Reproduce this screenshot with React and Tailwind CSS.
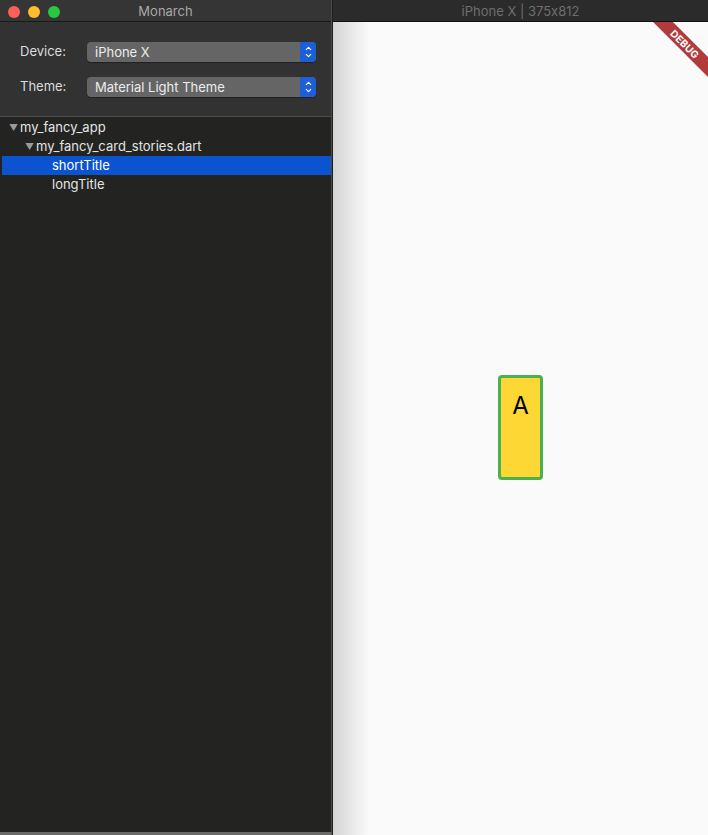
import { ChevronDown, ChevronUp } from "lucide-react";

function Select({ value }) {
  return (
    <div className="flex h-[20px] w-[229px] items-center overflow-hidden rounded-[4px] bg-[#656565] shadow-[0_1px_1px_rgba(0,0,0,0.35)]">
      <span className="flex-1 pl-[8px] text-[13px] leading-none text-[#ececec]">{value}</span>
      <span className="flex h-full w-[16px] flex-col items-center justify-center rounded-r-[4px] bg-[#1d5fd8]">
        <ChevronUp size={9} strokeWidth={3} className="-mb-[2px] text-white" />
        <ChevronDown size={9} strokeWidth={3} className="text-white" />
      </span>
    </div>
  );
}

function Row({ depth, label, open, selected }) {
  return (
    <div
      className={
        "ml-[2px] flex h-[19px] items-center text-[13px] leading-none " +
        (selected ? "bg-[#0b53cf] text-white" : "text-[#e4e4e4]")
      }
      style={{ paddingLeft: 7 + depth * 16 }}
    >
      <span className="w-[11px] text-[9px] text-[#9a9a9a]">{open ? "▼" : ""}</span>
      <span>{label}</span>
    </div>
  );
}

export default function App() {
  return (
    <div
      className="flex h-[835px] w-[708px] overflow-hidden bg-[#1e1e1e] [font-feature-settings:'calt'_0]"
      style={{ fontFamily: "Inter, 'Noto Sans', sans-serif" }}
    >
      {/* Monarch window */}
      <div className="flex h-full w-[332px] flex-col border-r border-b-[3px] border-[#4a4a48] border-b-[#6a6a68] bg-[#232422]">
        <div className="relative flex h-[22px] items-center justify-center border-b border-[#1a1a1a] bg-[#353535] pt-[2px]">
          <div className="absolute left-[8px] top-[6px] flex gap-[8px]">
            <span className="h-[12px] w-[12px] rounded-full bg-[#fe5f57]" />
            <span className="h-[12px] w-[12px] rounded-full bg-[#febc2e]" />
            <span className="h-[12px] w-[12px] rounded-full bg-[#28c840]" />
          </div>
          <span className="text-[13px] text-[#a8a8a8]">Monarch</span>
        </div>
        <div className="flex h-[95px] flex-col gap-[15px] border-b border-[#4b4b4b] bg-[#323232] pl-[20px] pt-[20px]">
          <div className="flex items-center">
            <span className="w-[67px] text-[13px] text-[#dcdcdc]">Device:</span>
            <Select value="iPhone X" />
          </div>
          <div className="flex items-center">
            <span className="w-[67px] text-[13px] text-[#dcdcdc]">Theme:</span>
            <Select value="Material Light Theme" />
          </div>
        </div>
        <div className="pt-[1px]">
          <Row depth={0} label="my_fancy_app" open />
          <Row depth={1} label="my_fancy_card_stories.dart" open />
          <Row depth={2} label="shortTitle" selected />
          <Row depth={2} label="longTitle" />
        </div>
      </div>

      {/* Device window */}
      <div className="flex h-full flex-1 flex-col pl-[1px]">
        <div className="flex h-[22px] items-center justify-center border-b border-[#111] bg-[#2b2b2b] pt-[2px]">
          <span className="text-[13px] text-[#6e6e6e]">iPhone X | 375x812</span>
        </div>
        <div className="relative flex flex-1 items-start justify-center overflow-hidden bg-[#fafafa]">
          <div className="absolute inset-y-0 left-0 w-[36px] bg-gradient-to-r from-[#d4d4d4] to-transparent" />
          <div className="absolute right-[-42px] top-[15px] flex h-[14px] w-[130px] rotate-45 items-center justify-center bg-[#b13b3b] text-[10px] font-bold tracking-[0.02em] text-white">
            DEBUG
          </div>
          <div className="relative mt-[353px] flex h-[105px] w-[45px] justify-center rounded-[4px] border-[3px] border-[#4caf50] bg-[#fdd835]">
            <span className="mt-[16px] text-[24px] leading-none text-black">A</span>
          </div>
        </div>
      </div>
    </div>
  );
}
